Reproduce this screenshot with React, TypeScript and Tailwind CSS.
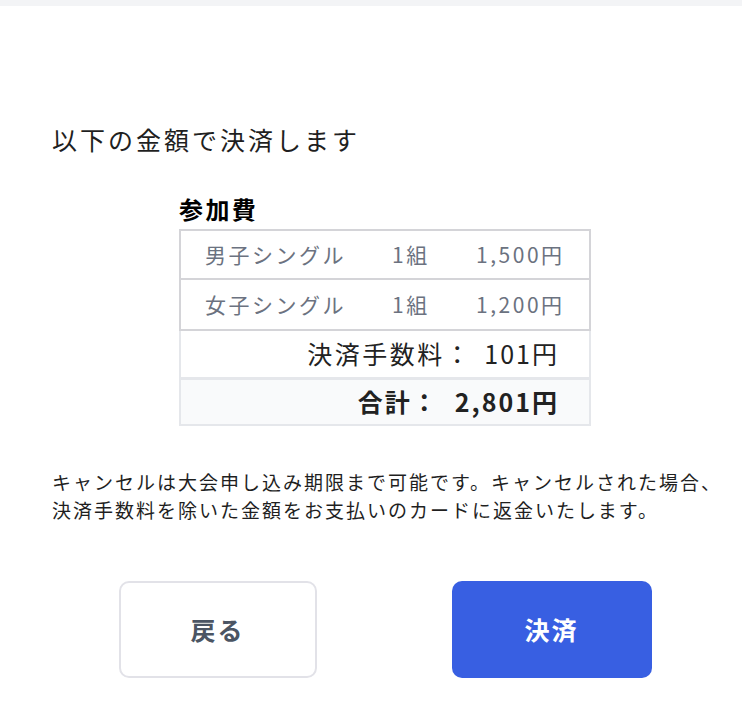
const FONT = { fontFamily: '"Noto Sans CJK JP", "Noto Sans", sans-serif' };

const ENTRIES = [
  { name: "男子シングル", count: "1組", price: "1,500円" },
  { name: "女子シングル", count: "1組", price: "1,200円" },
];

const App = () => {
  return (
    <div className="min-h-[710px] bg-white" style={FONT}>
      <div className="h-[6px] bg-[#f3f4f6]" />
      <div className="pl-[52px] pr-[24px] pt-[113px]">
        <h1 className="text-[25px] leading-[40px] tracking-[0.12em] text-[#1f1f1f]">
          以下の金額で決済します
        </h1>

        <div className="mx-auto mt-[32px] w-[412px]">
          <h2 className="text-[24px] font-bold leading-[36px] tracking-[0.1em] text-black">
            参加費
          </h2>
          <div className="mt-[2px] border-2 border-t-0 border-[#e5e7eb]">
            {ENTRIES.map((e, i) => (
              <div
                key={e.name}
                className={`-mx-[2px] flex h-[51px] items-center border-2 border-[#d4d4d8] text-[21px] tracking-[0.12em] text-[#6b7280] ${
                  i > 0 ? "border-t-0" : ""
                }`}
              >
                <span className="w-[211px] pl-[24px]">{e.name}</span>
                <span className="w-[84px]">{e.count}</span>
                <span>{e.price}</span>
              </div>
            ))}
            <div className="flex h-[46px] items-center justify-end pr-[30px] text-[25px] tracking-[0.1em] text-[#222]">
              決済手数料：
              <span className="ml-[12px] tracking-[0.08em]">101円</span>
            </div>
            <div className="flex h-[47px] items-center justify-end border-t-[3px] border-[#e5e7eb] bg-[#f9fafb] pr-[30px] text-[25px] font-bold tracking-[0.08em] text-[#222]">
              合計：
              <span className="ml-[16px]">2,801円</span>
            </div>
          </div>
        </div>

        <p className="mt-[42px] whitespace-nowrap text-[19px] leading-[28px] tracking-[0.105em] text-[#1f1f1f]">
          キャンセルは大会申し込み期限まで可能です。キャンセルされた場合、
          <br />
          決済手数料を除いた金額をお支払いのカードに返金いたします。
        </p>

        <div className="mt-[57px] flex justify-center gap-[135px]">
          <button className="h-[97px] w-[198px] rounded-[10px] border-2 border-[#e2e2e8] bg-white text-[25px] font-bold tracking-[0.08em] text-[#4b5563]">
            戻る
          </button>
          <button className="h-[97px] w-[200px] rounded-[10px] bg-[#385fe2] text-[25px] font-bold tracking-[0.08em] text-white">
            決済
          </button>
        </div>
      </div>
    </div>
  );
};

export default App;
